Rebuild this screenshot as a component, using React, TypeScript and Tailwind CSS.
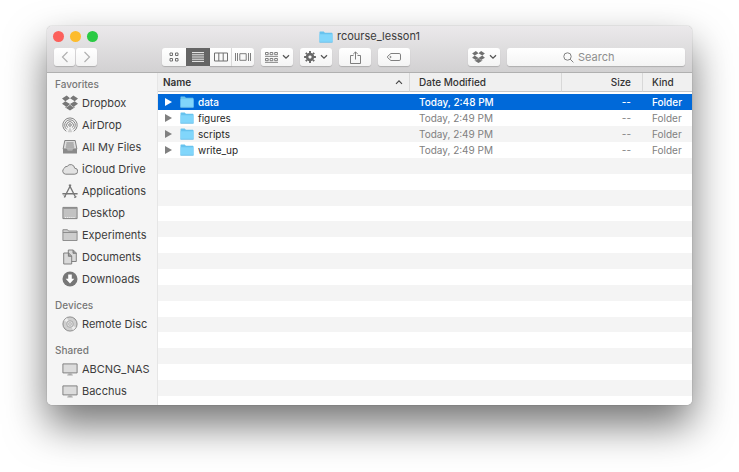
import { ReactNode } from "react";

const files = [
  { name: "data", date: "Today, 2:48 PM", selected: true },
  { name: "figures", date: "Today, 2:49 PM" },
  { name: "scripts", date: "Today, 2:49 PM" },
  { name: "write_up", date: "Today, 2:49 PM" },
];

const Dropbox = ({ className }: { className: string }) => (
  <svg viewBox="0 0 16 15" className={className} fill="currentColor">
    <path d="M4.7 0 0 3.1l3.300 2.600L8 2.800ZM0 8.300l4.700 3.100L8 8.600 3.300 5.700ZM8 8.600l3.300 2.800L16 8.300l-3.300-2.600ZM16 3.100 11.300 0 8 2.800l4.700 2.900ZM8 9.200 4.700 12l-1.400-.9v1L8 15l4.700-2.900v-1l-1.400.9Z" />
  </svg>
);

const Folder = () => (
  <svg viewBox="0 0 14 12" className="h-3 w-3.5 shrink-0">
    <path d="M.5 1.200Q.5.6 1.100.6h3.600l1.200 1.200h7q.6 0 .6.6V11H.5Z" fill="#68c3ee" />
    <path d="M.5 3.200h13v7.800q0 .5-.5.5H1q-.5 0-.5-.5Z" fill="#81d6fb" />
    <path d="M.5 11.300h13" stroke="#6bbbe4" strokeWidth=".7" />
  </svg>
);

const Chevron = () => (
  <svg viewBox="0 0 8 6" className="h-1.5 w-2" fill="none" stroke="#555" strokeWidth="1.3">
    <path d="m1 1.200 3 3 3-3" />
  </svg>
);

const Monitor = () => (
  <svg viewBox="0 0 16 16" className="size-4" fill="none">
    <path d="M.9 2.900h14.200v9H.9Z" fill="#dcdcdc" stroke="#777" strokeWidth=".9" />
    <path d="M6.300 12.300h3.400v1.300h1.100v1H5.200v-1h1.100Z" fill="#aaa" />
  </svg>
);

const sidebar: { title: string; items: { label: string; icon: ReactNode }[] }[] = [
  {
    title: "Favorites",
    items: [
      { label: "Dropbox", icon: <Dropbox className="size-4" /> },
      {
        label: "AirDrop",
        icon: (
          <svg viewBox="0 0 16 16" className="size-4" fill="none" stroke="currentColor" strokeWidth=".9">
            <path d="M4.300 14.300a7.200 7.200 0 1 1 7.400 0" />
            <path d="M4.900 12.400a5.300 5.300 0 1 1 6.200 0" />
            <path d="M5.700 10.600a3.400 3.400 0 1 1 4.600 0" />
            <circle cx="8" cy="8" r="1.300" />
            <path d="M8 10 5.700 14.900q2.300.7 4.600 0Z" fill="currentColor" stroke="none" opacity=".3" />
          </svg>
        ),
      },
      {
        label: "All My Files",
        icon: (
          <svg viewBox="0 0 16 16" className="size-4" fill="none" stroke="currentColor">
            <path d="M2.800 1.500h10.400l1.700 8.600H1.100Z" fill="#dedede" strokeWidth=".9" />
            <path d="M4.400 4h7.200M4.100 6h7.800M3.800 8h8.400" strokeWidth=".9" />
            <path d="M1 9.800h3.800l.8 1.400h4.800l.8-1.400H15v4.800H1Z" fill="#8a8a8a" stroke="none" />
          </svg>
        ),
      },
      {
        label: "iCloud Drive",
        icon: (
          <svg viewBox="0 0 16 16" className="size-4" fill="#e2e2e2" stroke="currentColor" strokeWidth=".9">
            <path d="M3.600 13.200A3.200 3.200 0 0 1 2.400 7.200 2.500 2.500 0 0 1 5.200 5.400 4.100 4.100 0 0 1 12.700 7.200a3 3 0 0 1 0 6Z" />
          </svg>
        ),
      },
      {
        label: "Applications",
        icon: (
          <svg viewBox="0 0 16 16" className="size-4" fill="none" stroke="currentColor">
            <path d="m7.100 1.600 6.600 12.900M8.900 1.600 2.300 14.500" strokeWidth="1.300" />
            <path d="M.4 10.700h15.200" strokeWidth="1.500" />
            <path d="m12 14.800 2.600-1.200M1.500 12.600l2.400 1.300" strokeWidth=".8" />
          </svg>
        ),
      },
      {
        label: "Desktop",
        icon: (
          <svg viewBox="0 0 16 16" className="size-4" fill="none">
            <path d="M.9 2.400h14.200v11.200H.9Z" fill="#c2c2c2" stroke="#7a7a7a" strokeWidth=".9" />
            <path d="M1.300 3.300h13.400" stroke="#8c8c8c" />
            <path d="M3 12.500h10" stroke="#f0f0f0" strokeWidth="1.200" strokeDasharray="1.200 .9" />
          </svg>
        ),
      },
      {
        label: "Experiments",
        icon: (
          <svg viewBox="0 0 16 16" className="size-4" fill="none" stroke="#868686" strokeWidth=".9">
            <path d="M.9 13.500V2.700h4.600l1 1.300h8.600v9.500Z" fill="#cdcdcd" />
            <path d="M.9 5.500h14.200" />
          </svg>
        ),
      },
      {
        label: "Documents",
        icon: (
          <svg viewBox="0 0 16 16" className="size-4" fill="#d9d9d9" stroke="currentColor" strokeWidth=".9">
            <path d="M6.300 1h5l3 3v8.500h-8Z" />
            <path d="M11 1v3.300h3.300" fill="#999" />
            <path d="M1.700 4h5l3 3v8h-8Z" />
            <path d="M6.400 4v3.300h3.300" fill="#999" />
          </svg>
        ),
      },
      {
        label: "Downloads",
        icon: (
          <svg viewBox="0 0 16 16" className="size-4">
            <circle cx="8" cy="8" r="7.500" fill="currentColor" />
            <path d="M6.200 3.400h3.600v4.300h2.500L8 12.500 3.700 7.700h2.500Z" fill="#fff" />
          </svg>
        ),
      },
    ],
  },
  {
    title: "Devices",
    items: [
      {
        label: "Remote Disc",
        icon: (
          <svg viewBox="0 0 16 16" className="size-4" fill="none">
            <circle cx="8" cy="8" r="7.100" fill="#cfcfcf" stroke="#777" strokeWidth=".8" />
            <path d="M8 8 2.200 4.500A6.800 6.800 0 0 1 5 1.900ZM8 8l5.800 3.500A6.800 6.800 0 0 1 11 14.100Z" fill="#ededed" />
            <circle cx="8" cy="8" r="3.300" fill="#ddd" stroke="#999" strokeWidth=".7" />
            <circle cx="8" cy="8" r="1.300" fill="#f5f5f5" stroke="#999" strokeWidth=".7" />
          </svg>
        ),
      },
    ],
  },
  {
    title: "Shared",
    items: [
      { label: "ABCNG_NAS", icon: <Monitor /> },
      { label: "Bacchus", icon: <Monitor /> },
    ],
  },
];

// Common look of the toolbar buttons
const btn = "flex h-[18px] items-center justify-center bg-linear-to-b from-white to-[#f4f4f4] shadow-[0_1px_1px_rgba(0,0,0,0.18)]";

function Toolbar() {
  return (
    <div className="flex items-center px-[7px]">
      <div className="flex gap-px text-[#b0b0b0]">
        <button aria-label="Back" className={`${btn} w-[21px] rounded-[3px]`}>
          <svg viewBox="0 0 8 12" className="h-3 w-2" fill="none" stroke="currentColor" strokeWidth="1.2">
            <path d="M6.500 1 1.500 6l5 5" />
          </svg>
        </button>
        <button aria-label="Forward" className={`${btn} w-[21px] rounded-[3px]`}>
          <svg viewBox="0 0 8 12" className="h-3 w-2" fill="none" stroke="currentColor" strokeWidth="1.2">
            <path d="m1.500 1 5 5-5 5" />
          </svg>
        </button>
      </div>

      <div className="ml-[65px] flex gap-[7px] text-[#707070]">
        {/* View switcher */}
        <div className="flex">
          <button aria-label="Icons" className={`${btn} w-6 rounded-l-[3px]`}>
            <svg viewBox="0 0 10 10" className="size-2.5" fill="none" stroke="currentColor">
              <path d="M1 1h2.500v2.500H1ZM6.500 1H9v2.500H6.500ZM1 6.500h2.500V9H1ZM6.500 6.500H9V9H6.500Z" />
            </svg>
          </button>
          <button aria-label="List" className="flex h-[18px] w-6 items-center justify-center bg-[#656565]">
            <svg viewBox="0 0 12 10" className="h-2.5 w-3" stroke="#fff" strokeWidth=".9">
              <path d="M0 .6h12M0 2.800h12M0 5h12M0 7.200h12M0 9.400h12" />
            </svg>
          </button>
          <button aria-label="Columns" className={`${btn} w-[22px] border-r border-[#dcdcdc]`}>
            <svg viewBox="0 0 14 10" className="h-2.5 w-3.5" fill="none" stroke="currentColor">
              <path d="M.5 1h13v8H.5ZM4.800 1v8M9.200 1v8" />
            </svg>
          </button>
          <button aria-label="Cover Flow" className={`${btn} w-[22px] rounded-r-[3px]`}>
            <svg viewBox="0 0 16 10" className="h-2.5 w-4" fill="none" stroke="currentColor" strokeWidth=".9">
              <path d="M.5 1v8M2.500 1v8M13.500 1v8M15.500 1v8M4.800 1.700h6.400v6.600H4.800Z" />
            </svg>
          </button>
        </div>
        <button aria-label="Arrange" className={`${btn} w-8 gap-1 rounded-[3px]`}>
          <svg viewBox="0 0 13 12" className="h-3 w-[13px]" fill="none" stroke="currentColor" strokeWidth=".9">
            <path d="M.5 1.500h2.700v2.200H.5ZM5.100 1.500h2.700v2.200H5.100ZM9.700 1.500h2.700v2.200H9.700ZM.5 7.500h2.700v2.200H.5ZM5.100 7.500h2.700v2.200H5.100ZM9.700 7.500h2.700v2.200H9.700Z" />
            <path d="M0 5.400h13M0 11.400h13" strokeWidth=".8" />
          </svg>
          <Chevron />
        </button>
        <button aria-label="Action" className={`${btn} w-8 gap-1 rounded-[3px]`}>
          <svg viewBox="-6 -6 12 12" className="size-3" fill="none" stroke="#686868">
            <circle r="2.900" strokeWidth="2.600" />
            <path d="M0-5.900V-4M0 5.900V4M-5.900 0H-4M5.900 0H4M-4.200-4.200l1.300 1.300M4.200 4.200 2.900 2.900M-4.200 4.200l1.300-1.300M4.200-4.200 2.900-2.900" strokeWidth="1.900" />
          </svg>
          <Chevron />
        </button>
        <button aria-label="Share" className={`${btn} w-8 rounded-[3px]`}>
          <svg viewBox="0 0 11 13" className="h-[13px] w-[11px]" fill="none" stroke="currentColor" strokeWidth=".9">
            <path d="M3.500 4.500h-3v8h10v-8h-3M5.500 8.500V1M3.200 3.200 5.500.9l2.300 2.300" />
          </svg>
        </button>
        <button aria-label="Tags" className={`${btn} w-8 rounded-[3px]`}>
          <svg viewBox="0 0 14 8" className="h-2 w-3.5" fill="none" stroke="currentColor" strokeWidth=".9">
            <path d="M3.900.5h8.300q1.300 0 1.300 1.300v4.400q0 1.300-1.300 1.300H3.900L.6 4.600q-.4-.6 0-1.200Z" />
            <circle cx="3.500" cy="4" r=".6" />
          </svg>
        </button>
      </div>

      <div className="ml-auto flex gap-[7px] text-[#707070]">
        <button aria-label="Dropbox" className={`${btn} w-8 gap-1 rounded-[3px]`}>
          <Dropbox className="h-3 w-[13px]" />
          <Chevron />
        </button>
        <label className={`${btn} w-[178px] gap-1 rounded-[3px] pl-14`}>
          <svg viewBox="0 0 11 11" className="size-[11px] shrink-0" fill="none" stroke="#808080" strokeWidth="1">
            <circle cx="4.500" cy="4.500" r="3.700" />
            <path d="m7.200 7.200 3.200 3.200" />
          </svg>
          <input type="search" aria-label="Search" placeholder="Search" className="min-w-0 flex-1 text-[11px] outline-none placeholder:text-[#8e8e8e]" />
        </label>
      </div>
    </div>
  );
}

function Sidebar() {
  return (
    <nav className="flex w-[111px] shrink-0 flex-col gap-[7px] border-r border-[#e6e6e6] bg-[#f5f5f5] py-[3px]">
      {sidebar.map((section) => (
        <section key={section.title}>
          <h2 className="h-4 pl-2 text-[10px] leading-4 font-medium text-[#777]">{section.title}</h2>
          {section.items.map((item) => (
            <a key={item.label} href="#" className="flex h-[22px] items-center gap-1 pl-[15px] text-[11px] whitespace-nowrap text-[#3c3c3c]">
              <span className="text-[#777]">{item.icon}</span>
              {item.label}
            </a>
          ))}
        </section>
      ))}
    </nav>
  );
}

function FileList() {
  const head = "flex h-[19px] items-center border-b border-[#c8c8c8] bg-[#f0f0f0] ";
  return (
    <main className="flex min-w-0 flex-1 flex-col bg-white">
      <table className="w-full table-fixed text-left text-[10px] leading-4">
        <thead className="text-[#333]">
          <tr>
            <th className="p-0 pb-0.5 font-semibold">
              <button className={head + "w-full justify-between pr-1.5 pl-[5px]"}>
                Name
                <svg viewBox="0 0 8 6" className="h-1.5 w-2" fill="none" stroke="#444" strokeWidth="1.1">
                  <path d="m1 4.800 3-3 3 3" />
                </svg>
              </button>
            </th>
            <th className="w-[152px] p-0 pb-0.5 font-medium">
              <div className={head + "border-l border-l-[#d8d8d8] pl-[9px]"}>Date Modified</div>
            </th>
            <th className="w-[81px] p-0 pb-0.5 font-medium">
              <div className={head + "justify-end border-l border-l-[#d8d8d8] pr-[11px]"}>Size</div>
            </th>
            <th className="w-[50px] p-0 pb-0.5 font-medium">
              <div className={head + "border-l border-l-[#d8d8d8] pl-[9px]"}>Kind</div>
            </th>
          </tr>
        </thead>
        <tbody>
          {files.map((file) => (
            <tr
              key={file.name}
              className={file.selected ? "bg-[#0069d9] font-medium text-white" : "text-[#808080] odd:bg-[#f4f4f4]"}
            >
              <td className="h-4 p-0">
                <div className={`flex items-center pl-[7px] ${file.selected ? "" : "text-[#262626]"}`}>
                  <button aria-label={`Expand ${file.name}`} className={file.selected ? "text-white" : "text-[#808080]"}>
                    <svg viewBox="0 0 7 8" className="h-2 w-[7px]" fill="currentColor">
                      <path d="M0 0v8l7-4Z" />
                    </svg>
                  </button>
                  <span className="mr-1 ml-2">
                    <Folder />
                  </span>
                  {file.name}
                </div>
              </td>
              <td className="p-0 pl-2.5">{file.date}</td>
              <td className="p-0 pr-[11px] text-right">--</td>
              <td className="p-0 pl-2.5">Folder</td>
            </tr>
          ))}
        </tbody>
      </table>
      {/* Empty striped rows fill the rest of the pane */}
      <div className="flex flex-1 flex-col pb-[9px]">
        {Array.from({ length: 15 }, (_, i) => (
          <div key={i} className="flex-1 odd:bg-[#f4f4f4]" />
        ))}
      </div>
    </main>
  );
}

export default function App() {
  return (
    <div className="bg-white px-[47px] pt-[26px] pb-[67px] font-['Inter',sans-serif]">
      <div className="overflow-hidden rounded-[5px] shadow-[0_0_1px_rgba(0,0,0,0.5),0_20px_40px_rgba(0,0,0,0.55)]">
        <header className="flex h-[47px] flex-col gap-px border-b border-[#b0b0b0] bg-linear-to-b from-[#ebe9eb] to-[#d2d1d2]">
          <div className="grid h-[21px] grid-cols-[1fr_auto_1fr] items-center px-1.5">
            <div className="flex gap-1.5">
              <button aria-label="Close" className="size-[11px] rounded-full bg-[#fc605b]" />
              <button aria-label="Minimize" className="size-[11px] rounded-full bg-[#fdbc2e]" />
              <button aria-label="Zoom" className="size-[11px] rounded-full bg-[#2aca44]" />
            </div>
            <h1 className="flex items-center gap-1 text-[11px] text-[#3a3a3a]">
              <Folder />
              rcourse_lesson1
            </h1>
          </div>
          <Toolbar />
        </header>
        <div className="flex">
          <Sidebar />
          <FileList />
        </div>
      </div>
    </div>
  );
}
